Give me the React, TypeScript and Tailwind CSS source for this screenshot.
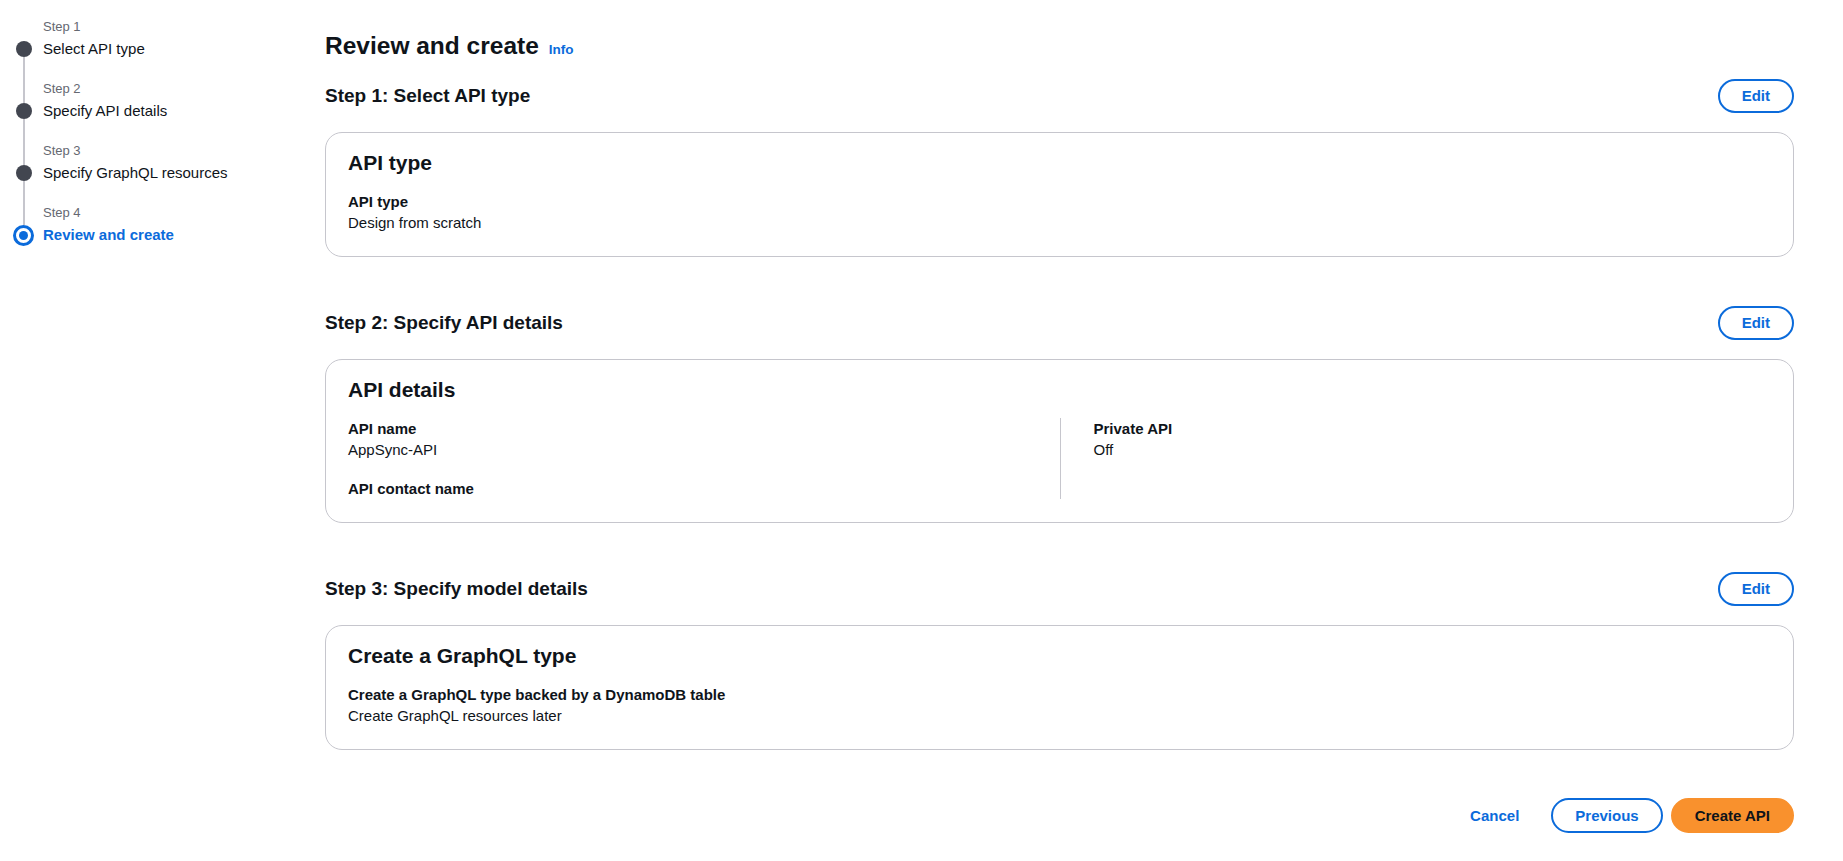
import React from "react";

const steps = [
  { n: 1, label: "Select API type" },
  { n: 2, label: "Specify API details" },
  { n: 3, label: "Specify GraphQL resources" },
  { n: 4, label: "Review and create" },
];

function StepNav() {
  return (
    <nav className="w-[325px] shrink-0 pl-[13px] pt-[18px]">
      {steps.map((step, i) => {
        const active = i === steps.length - 1;
        const last = i === steps.length - 1;
        return (
          <div key={step.n} className="flex gap-[9px]">
            <div className="flex w-[21px] flex-col items-center">
              <div className={`${active ? "h-[21px]" : "h-[23px]"} w-[2px] ${i > 0 ? "bg-[#c6c6cd]" : ""}`} />
              {active ? (
                <div className="flex h-[21px] w-[21px] items-center justify-center rounded-full border-[3px] border-[#0b6bdb]">
                  <div className="h-[9px] w-[9px] rounded-full bg-[#0b6bdb]" />
                </div>
              ) : (
                <div className="h-4 w-4 rounded-full bg-[#424650]" />
              )}
              <div className={`w-[2px] flex-1 ${last ? "" : "bg-[#c6c6cd]"}`} />
            </div>
            <div className="pb-[20px]">
              <div className="text-[13px] leading-[18px] text-[#656871]">Step {step.n}</div>
              <div
                className={`mt-[2px] text-[15px] leading-[22px] ${
                  active ? "font-bold text-[#0b6bdb]" : "text-[#0f141a]"
                }`}
              >
                {step.label}
              </div>
            </div>
          </div>
        );
      })}
    </nav>
  );
}

function EditButton() {
  return (
    <button className="h-[34px] rounded-full border-2 border-[#0b6bdb] px-[22px] text-[15px] font-bold leading-[22px] text-[#0b6bdb]">
      Edit
    </button>
  );
}

function KeyValue({ label, value }: { label: string; value?: string }) {
  return (
    <div>
      <div className="text-[15px] font-bold leading-[21px]">{label}</div>
      {value && <div className="text-[15px] leading-[21px]">{value}</div>}
    </div>
  );
}

function Section({ title, heading, children }: { title: string; heading: string; children: React.ReactNode }) {
  return (
    <section>
      <div className="flex h-[34px] items-center justify-between">
        <h2 className="text-[19px] font-bold leading-[24px]">{title}</h2>
        <EditButton />
      </div>
      <div className="mt-[19px] rounded-[17px] border border-[#c6c6cd] px-[22px] pb-[23px] pt-[17px]">
        <h3 className="text-[21px] font-bold leading-[26px]">{heading}</h3>
        <div className="mt-[15px]">{children}</div>
      </div>
    </section>
  );
}

export default function App() {
  return (
    <div className="flex min-h-screen bg-white font-['Liberation_Sans',Arial,sans-serif] text-[#0f141a]">
      <StepNav />
      <main className="flex-1 pb-[30px] pr-[49px] pt-[30px]">
        <div className="flex items-baseline">
          <h1 className="text-[24.5px] font-bold leading-[31px]">Review and create</h1>
          <a className="ml-[10px] text-[13.5px] font-bold text-[#0b6bdb]">Info</a>
        </div>

        <div className="mt-[18px] flex flex-col gap-[49px]">
          <Section title="Step 1: Select API type" heading="API type">
            <KeyValue label="API type" value="Design from scratch" />
          </Section>

          <Section title="Step 2: Specify API details" heading="API details">
            <div className="grid grid-cols-2">
              <div className="flex flex-col gap-[18px]">
                <KeyValue label="API name" value="AppSync-API" />
                <KeyValue label="API contact name" />
              </div>
              <div className="border-l border-[#c6c6cd] pl-[33px]">
                <KeyValue label="Private API" value="Off" />
              </div>
            </div>
          </Section>

          <Section title="Step 3: Specify model details" heading="Create a GraphQL type">
            <KeyValue label="Create a GraphQL type backed by a DynamoDB table" value="Create GraphQL resources later" />
          </Section>

          <div className="-mt-[1px] flex items-center justify-end gap-[8px]">
            <button className="h-[34px] rounded-full border-2 border-transparent px-[22px] text-[15px] font-bold leading-[22px] text-[#0b6bdb]">
              Cancel
            </button>
            <button className="h-[35px] rounded-full border-2 border-[#0b6bdb] px-[22px] text-[15px] font-bold leading-[22px] text-[#0b6bdb]">
              Previous
            </button>
            <button className="h-[35px] rounded-full border-2 border-[#f9912d] bg-[#f9912d] px-[22px] text-[15px] font-bold leading-[22px] text-[#0f141a]">
              Create API
            </button>
          </div>
        </div>
      </main>
    </div>
  );
}
